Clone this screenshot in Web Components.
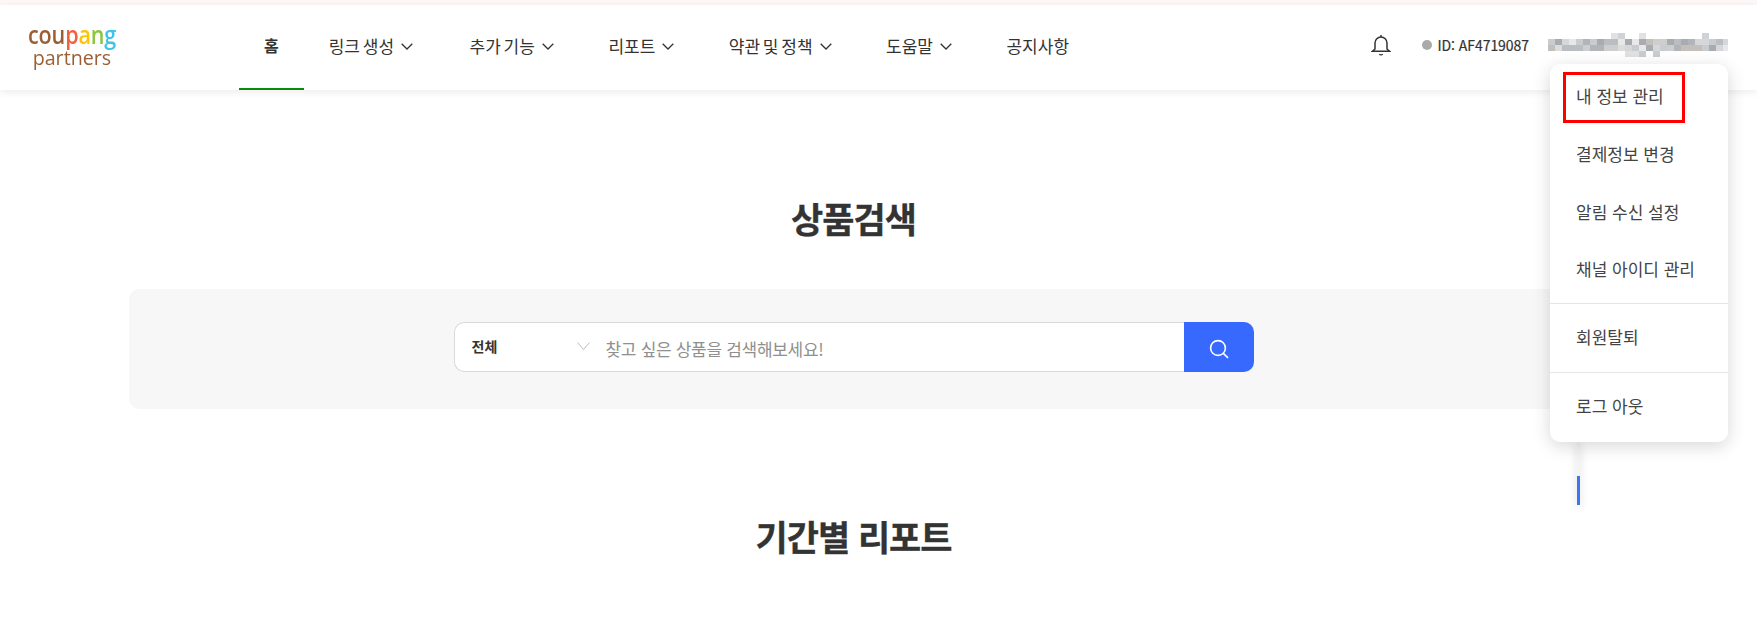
<!DOCTYPE html>
<html lang="ko"><head><meta charset="utf-8"><title>Coupang Partners</title>
<style>
html,body{margin:0;padding:0;height:621px;overflow:hidden;background:#fff;font-family:"Noto Sans CJK KR","Noto Sans",sans-serif;color:#333}
</style></head><body>
<cp-page>
  <cp-header slot="top"></cp-header>
  <cp-title>상품검색</cp-title>
  <cp-search></cp-search>
  <cp-title class="second">기간별 리포트</cp-title>
  <cp-menu slot="over"></cp-menu>
</cp-page>
<script>
const el=(name,html)=>customElements.define(name,class extends HTMLElement{constructor(){super();this.attachShadow({mode:'open'}).innerHTML=typeof html==='function'?html():html}});
const chev='<svg width="12" height="7" viewBox="0 0 12 7" fill="none"><path d="M.7.8 6 6 11.3.8" stroke="#333" stroke-width="1.3"/></svg>';
const FONT='"Noto Sans CJK KR","Noto Sans",sans-serif';

el('cp-page',`<style>
:host{display:block;position:relative;width:1757px;height:621px;overflow:hidden;background:#fff}
.strip{height:5px;background:#fdf7f7}
.main{width:1449px;margin-left:129px;display:flex;flex-direction:column}
.track{position:absolute;left:1577px;top:442px;width:3px;height:63px;background:linear-gradient(#f4f4f4 0 34px,#3a78f2 34px);box-shadow:0 2px 8px rgba(0,0,0,.18)}
</style>
<div class="strip"></div>
<slot name="top"></slot>
<div class="main"><slot></slot></div>
<div class="track"></div>
<slot name="over"></slot>`);

el('cp-logo',`<style>
:host{display:flex;flex-direction:column;align-items:center;width:88px;font-family:"Open Sans",sans-serif;color:#9b5f35}
div{white-space:nowrap}
.a{font-size:26px;line-height:24px;font-weight:600;transform:scaleX(.83);letter-spacing:-.2px}
.b{font-size:20.5px;line-height:22px;font-weight:500;transform:scaleX(.96)}
i{font-style:normal}
</style><div class="a">cou<i style="color:#f4603c">p</i><i style="color:#fdc400">a</i><i style="color:#8cc63f">n</i><i style="color:#3cc4ea">g</i></div><div class="b">partners</div>`);

el('cp-nav-item',()=>`<style>
:host{display:flex;align-items:center;height:85px;box-sizing:border-box;padding:0 29.500px 5px 25px;font-size:17px;word-spacing:-2px;color:#333;white-space:nowrap;gap:7px}
:host([active]){padding:0 25px 3px;border-bottom:2px solid #0a8a0a;font-weight:700;font-size:16px}
:host([wide]){padding-right:31.500px}
</style><slot></slot><slot name="c"></slot>`);

el('cp-header',()=>{
 const nav=[['홈',0],['링크 생성',1],['추가 기능',1],['리포트',1],['약관 및 정책',1],['도움말',1],['공지사항',0]];
 let blur='';const g=['#c9c9c9','#b3b6ba','#d8d8d8','#a9adb2','#e6e6e6','#c2c6ca','#9fa3a8','#d0d3d6','#bcb8b4'];
 let s=7;for(let y=0;y<4;y++)for(let x=0;x<26;x++){s=(s*31+11)%97;const c=g[s%9];const o=(y==0||y==3)?(s%6==0?.55:0):.9;blur+=`<rect x="${x*7}" y="${y*6}" width="7" height="6" fill="${c}" opacity="${o}"/>`}
 return `<style>
:host{display:flex;height:85px;background:#fff;position:relative;box-shadow:0 2px 8px rgba(0,0,0,.08);font-family:${FONT}}
cp-logo{margin:17px 0 0 28px;height:48px}
nav{display:flex;margin-left:123px}
.right{margin-left:auto;display:flex;align-items:center;height:85px;padding-bottom:5px;box-sizing:border-box;padding-right:29px}
.dot{width:10px;height:10px;border-radius:50%;background:#aaa;margin:0 5px 0 31px}
.id{font-size:14px;letter-spacing:-.05px;color:#333;font-weight:400;-webkit-text-stroke:.2px #333}
.blur{margin-left:19px;display:block;filter:blur(.5px)}
</style>
<cp-logo></cp-logo>
<nav>${nav.map((n,i)=>`<cp-nav-item ${i==0?'active':''} ${i==1?'wide':''}>${n[0]}${n[1]?`<span slot="c" style="display:flex;margin-top:2px">${chev}</span>`:''}</cp-nav-item>`).join('')}</nav>
<div class="right">
<svg width="20" height="22" viewBox="0 0 20 22" fill="none" stroke="#333" stroke-width="1.5"><path d="M10 1v2M4 15V9a6 6 0 0 1 12 0v6l2.5 2.2H1.5zM8.300 20.200c.8.8 2.600.8 3.400 0"/></svg>
<span class="dot"></span><span class="id">ID: AF4719087</span>
<svg class="blur" width="180" height="24" viewBox="0 0 180 24">${blur}</svg>
</div>`});

el('cp-title',`<style>
:host{display:block;text-align:center;font-size:35px;line-height:40px;font-weight:700;letter-spacing:-1px;color:#333;-webkit-text-stroke:.3px #333;margin:108px 0 51px}
:host(.second){margin:107px 0 0}
</style><slot></slot>`);

el('cp-search',`<style>
:host{display:flex;justify-content:center;box-sizing:border-box;height:120px;padding-top:33px;background:#f7f7f7;border-radius:10px}
.box{display:flex;width:800px;height:50px}
.field{flex:1;display:flex;align-items:center;background:#fff;border:1px solid #d9d9d9;border-right:0;border-radius:10px 0 0 10px;box-sizing:border-box;padding-left:17px}
.sel{width:118px;display:flex;font-size:14px;font-weight:700;color:#333;align-items:center;position:relative;top:-1px}
.sel svg{margin-left:auto}
.ph{margin-left:16px;font-size:17px;letter-spacing:-.3px;color:#8f8f8f;position:relative;top:1px}
.btn{width:70px;background:#3769ff;border-radius:0 10px 10px 0;display:flex;align-items:center;justify-content:center;box-sizing:border-box;padding-top:4px}
</style>
<div class="box"><div class="field">
<div class="sel">전체<svg width="13" height="8" viewBox="0 0 13 8" fill="none"><path d="M.5.5 6.500 7.500 12.500.5" stroke="#bbb" stroke-width="1"/></svg></div>
<span class="ph">찾고 싶은 상품을 검색해보세요!</span></div>
<div class="btn"><svg width="20" height="20" viewBox="0 0 20 20" fill="none" stroke="#fff" stroke-width="1.6"><circle cx="9" cy="9" r="7.400"/><path d="M14.300 14.300 19 18.800"/></svg></div></div>`);

el('cp-menu',`<style>
:host{position:absolute;left:1550px;top:64px;width:178px;height:378px;background:#fff;border-radius:10px;box-shadow:0 4px 18px rgba(0,0,0,.16);box-sizing:border-box;font-size:17px;color:#444;font-family:${FONT};z-index:5}
.g{padding:3px 0 5px}.g+.g{border-top:1px solid #e6e6e6;padding:4px 0 7px}.g+.g+.g{padding-top:3px}
.r{height:57.700px;display:flex;align-items:center;padding-left:26px;white-space:nowrap;box-sizing:border-box}
.mark{position:absolute;left:13px;top:8px;width:122px;height:51px;border:3px solid #f00;box-sizing:border-box}
</style>
<div class="g"><div class="r">내 정보 관리</div><div class="r">결제정보 변경</div><div class="r">알림 수신 설정</div><div class="r">채널 아이디 관리</div></div>
<div class="g"><div class="r">회원탈퇴</div></div>
<div class="g"><div class="r">로그 아웃</div></div>
<div class="mark"></div>`);
</script>
</body></html>
